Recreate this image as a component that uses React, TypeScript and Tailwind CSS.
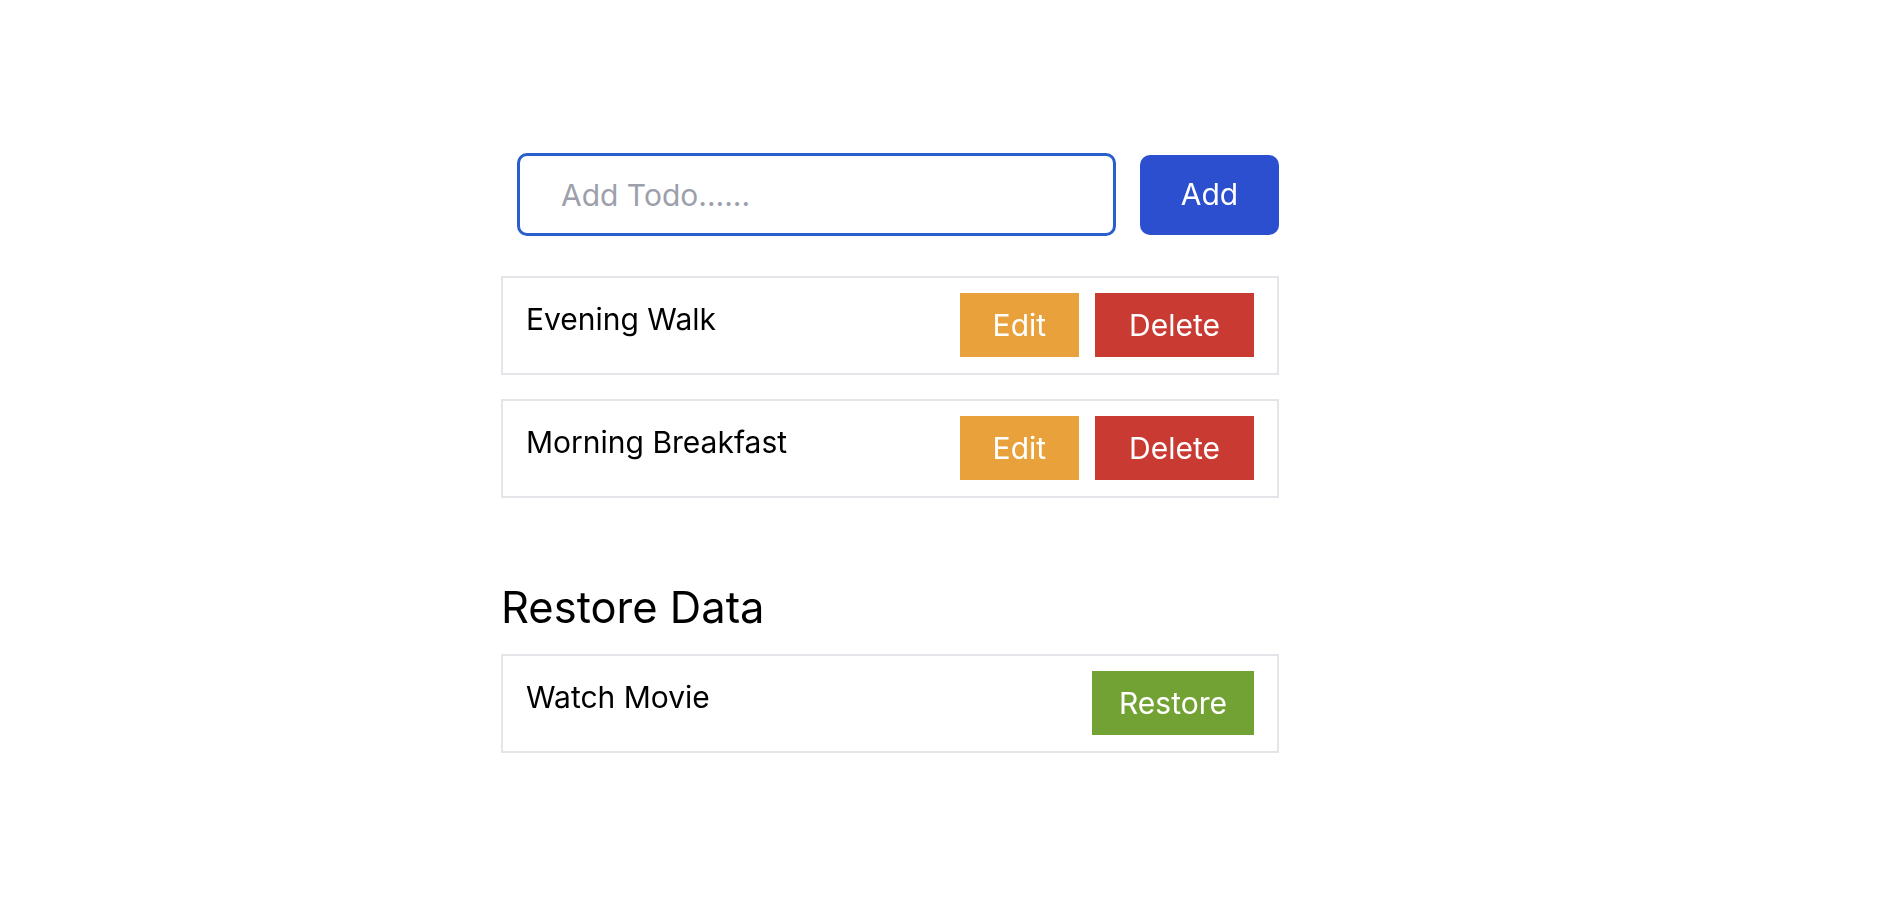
import { useState } from 'react';

interface Todo {
  id: number;
  text: string;
}

const TodoRow: React.FC<{ todo: Todo; children: React.ReactNode }> = ({ todo, children }) => {
  return (
    <div className="flex items-start justify-between border-2 border-[#e4e4e9] px-[23px] pt-[15px] pb-[16px]">
      <span className="pt-[8px] text-[30px] leading-[36px] text-black">{todo.text}</span>
      <div className="flex items-center gap-4">{children}</div>
    </div>
  );
};

export default function App() {
  const [value, setValue] = useState('');
  const [todos, setTodos] = useState<Todo[]>([
    { id: 1, text: 'Evening Walk' },
    { id: 2, text: 'Morning Breakfast' },
  ]);
  const [deleted, setDeleted] = useState<Todo[]>([{ id: 3, text: 'Watch Movie' }]);

  const handleAdd = () => {
    if (!value.trim()) return;
    setTodos([...todos, { id: Date.now(), text: value }]);
    setValue('');
  };

  const handleDelete = (todo: Todo) => {
    setTodos(todos.filter((t) => t.id !== todo.id));
    setDeleted([...deleted, todo]);
  };

  const handleRestore = (todo: Todo) => {
    setDeleted(deleted.filter((t) => t.id !== todo.id));
    setTodos([...todos, todo]);
  };

  return (
    <div className="min-h-screen bg-white font-['Inter',sans-serif]">
      <div className="ml-[501px] w-[778px] pt-[153px]">
        {/* Input */}
        <div className="flex items-center gap-6 pl-4">
          <input
            autoFocus
            value={value}
            onChange={(e) => setValue(e.target.value)}
            placeholder="Add Todo......"
            className="h-[83px] flex-1 rounded-[10px] border-[3px] border-[#2a5ecb] pl-[41px] text-[30px] text-black caret-black outline-none placeholder:text-[#9ca0ab]"
          />
          <button
            onClick={handleAdd}
            className="h-[80px] w-[139px] rounded-[10px] bg-[#2b4fcf] text-[30px] text-white"
          >
            Add
          </button>
        </div>

        {/* Todo list */}
        <div className="mt-10 flex flex-col gap-6">
          {todos.map((todo) => (
            <TodoRow key={todo.id} todo={todo}>
              <button className="h-16 bg-[#e9a23b] px-[33px] text-[30px] text-white">Edit</button>
              <button
                onClick={() => handleDelete(todo)}
                className="h-16 bg-[#c93a32] px-[34px] text-[30px] text-white"
              >
                Delete
              </button>
            </TodoRow>
          ))}
        </div>

        {/* Restore section */}
        <h2 className="mt-[84px] text-[43.5px] leading-[51px] text-black">Restore Data</h2>
        <div className="mt-[21px] flex flex-col gap-6">
          {deleted.map((todo) => (
            <TodoRow key={todo.id} todo={todo}>
              <button
                onClick={() => handleRestore(todo)}
                className="h-16 bg-[#73a234] px-[27px] text-[30px] text-white"
              >
                Restore
              </button>
            </TodoRow>
          ))}
        </div>
      </div>
    </div>
  );
}
